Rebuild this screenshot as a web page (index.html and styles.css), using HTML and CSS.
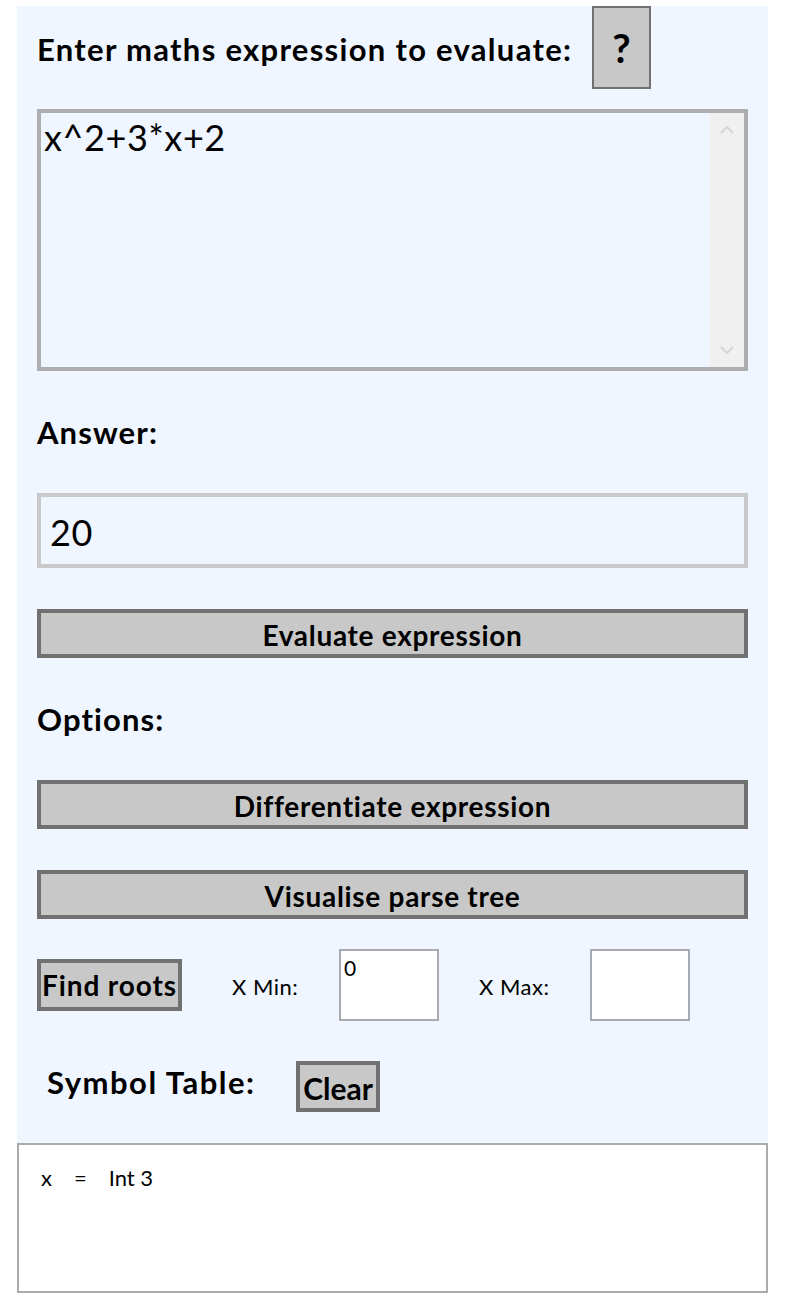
FILE: index.html
```html
<!DOCTYPE html>
<html lang="en">
<head>
<meta charset="utf-8">
<title>Expression evaluator</title>
<link rel="stylesheet" href="styles.css">
</head>
<body>
<div class="app">
  <div class="panel">
    <div class="head-row">
      <h2 class="heading">Enter maths expression to evaluate:</h2>
      <button class="help-btn" type="button">?</button>
    </div>
    <div class="expr-box">
      <textarea class="expr-input" spellcheck="false">x^2+3*x+2</textarea>
      <div class="scrollbar">
        <svg class="arrow" width="34" height="34" viewBox="0 0 34 34"><polyline points="11,20 17,14 23,20" fill="none" stroke="#d6d6d6" stroke-width="2"/></svg>
        <svg class="arrow" width="34" height="34" viewBox="0 0 34 34"><polyline points="11,14 17,20 23,14" fill="none" stroke="#d6d6d6" stroke-width="2"/></svg>
      </div>
    </div>
    <h2 class="section-label">Answer:</h2>
    <input class="answer-input" type="text" value="20">
    <button class="wide-btn eval-btn" type="button">Evaluate expression</button>
    <h2 class="section-label">Options:</h2>
    <button class="wide-btn" type="button">Differentiate expression</button>
    <button class="wide-btn tree-btn" type="button">Visualise parse tree</button>
    <div class="roots-row">
      <button class="roots-btn" type="button">Find roots</button>
      <span class="range-label min-label">X Min:</span>
      <textarea class="range-input" spellcheck="false">0</textarea>
      <span class="range-label max-label">X Max:</span>
      <textarea class="range-input" spellcheck="false"></textarea>
    </div>
    <div class="symbol-row">
      <h2 class="sym-label">Symbol Table:</h2>
      <button class="clear-btn" type="button">Clear</button>
    </div>
  </div>
  <div class="symbol-box">
    <table class="sym-table">
      <tr><td>x</td><td>=</td><td>Int 3</td></tr>
    </table>
  </div>
</div>
</body>
</html>
```
FILE: styles.css
```css
body {
  margin: 0;
  background: #ffffff;
  color: #000;
  font-family: Lato, "Open Sans", sans-serif;
}

.app {
  padding: 6px 0 0 17px;
  width: 751px;
}

.panel {
  background: #eff6ff;
  padding: 0 20px 31px;
}

.head-row {
  display: flex;
  align-items: flex-start;
  height: 83px;
}

.heading {
  margin: 28px 0 0;
  width: 535px;
  white-space: nowrap;
  font-size: 31px;
  line-height: 31px;
  font-weight: 700;
  letter-spacing: 1.3px;
}

.help-btn {
  margin-left: 20px;
  width: 59px;
  height: 83px;
  box-sizing: border-box;
  border: 2px solid #717171;
  background: #c8c8c8;
  color: #000;
  font-family: Lato, "Open Sans", sans-serif;
  font-weight: 700;
  font-size: 40px;
  padding: 0;
}

.expr-box {
  margin-top: 20px;
  height: 262px;
  box-sizing: border-box;
  border: 4px solid #adadad;
  background: #eff6ff;
  display: flex;
}

.expr-input {
  flex: 1;
  border: 0;
  margin: 0;
  background: transparent;
  resize: none;
  outline: none;
  overflow: hidden;
  color: #000;
  font-family: Lato, "Open Sans", sans-serif;
  font-size: 36px;
  line-height: 44px;
  letter-spacing: 0.6px;
  padding: 2px 3px;
}

.scrollbar {
  width: 34px;
  background: #f0f0f0;
  display: flex;
  flex-direction: column;
  justify-content: space-between;
}

.arrow {
  display: block;
}

.section-label {
  margin: 46px 0 45px;
  font-size: 31px;
  line-height: 31px;
  font-weight: 700;
  letter-spacing: 1.1px;
}

.answer-input {
  display: block;
  width: 100%;
  height: 75px;
  box-sizing: border-box;
  border: 4px solid #c9c9c9;
  background: #eff6ff;
  color: #000;
  font-family: Lato, "Open Sans", sans-serif;
  font-size: 36px;
  letter-spacing: 0.6px;
  padding: 2px 0 0 9px;
  margin: 0;
  outline: none;
}

.wide-btn {
  display: block;
  width: 100%;
  height: 49px;
  box-sizing: border-box;
  border: 4px solid #717171;
  background: #c8c8c8;
  color: #000;
  font-family: Lato, "Open Sans", sans-serif;
  font-weight: 700;
  font-size: 28px;
  line-height: 28px;
  letter-spacing: 0.7px;
  padding: 2px 0 0;
  margin: 0;
}

.eval-btn {
  margin-top: 41px;
}

.tree-btn {
  margin-top: 41px;
}

.roots-row {
  margin-top: 30px;
  height: 72px;
  display: flex;
  align-items: center;
}

.roots-btn {
  width: 145px;
  height: 52px;
  box-sizing: border-box;
  border: 4px solid #717171;
  background: #c8c8c8;
  color: #000;
  font-family: Lato, "Open Sans", sans-serif;
  font-weight: 700;
  font-size: 28px;
  line-height: 28px;
  letter-spacing: 0.9px;
  padding: 0;
}

.range-label {
  font-size: 22px;
  line-height: 22px;
  letter-spacing: 0.5px;
  padding-top: 3px;
  white-space: nowrap;
}

.min-label {
  margin-left: 50px;
  width: 107px;
}

.max-label {
  margin-left: 40px;
  width: 111px;
}

.range-input {
  width: 100px;
  height: 72px;
  box-sizing: border-box;
  border: 2px solid #a9a9b1;
  background: #fff;
  color: #000;
  font-family: Lato, "Open Sans", sans-serif;
  font-size: 21px;
  line-height: 26px;
  padding: 4px 3px;
  margin: 0;
  resize: none;
  overflow: hidden;
  outline: none;
}

.symbol-row {
  margin-top: 40px;
  height: 51px;
  display: flex;
  align-items: flex-start;
}

.sym-label {
  margin: 6px 0 0 10px;
  width: 249px;
  white-space: nowrap;
  font-size: 31px;
  line-height: 31px;
  font-weight: 700;
  letter-spacing: 1.5px;
}

.clear-btn {
  width: 84px;
  height: 51px;
  box-sizing: border-box;
  border: 4px solid #717171;
  background: #c8c8c8;
  color: #000;
  font-family: Lato, "Open Sans", sans-serif;
  font-weight: 700;
  font-size: 30px;
  line-height: 30px;
  padding: 3px 0 0;
}

.symbol-box {
  width: 751px;
  height: 150px;
  box-sizing: border-box;
  border: 2px solid #ababab;
  background: #fff;
}

.sym-table {
  margin: 20px 0 0 22px;
  border-collapse: collapse;
  font-size: 22px;
  line-height: 26px;
}

.sym-table td {
  padding: 0 22px 0 0;
}
```
